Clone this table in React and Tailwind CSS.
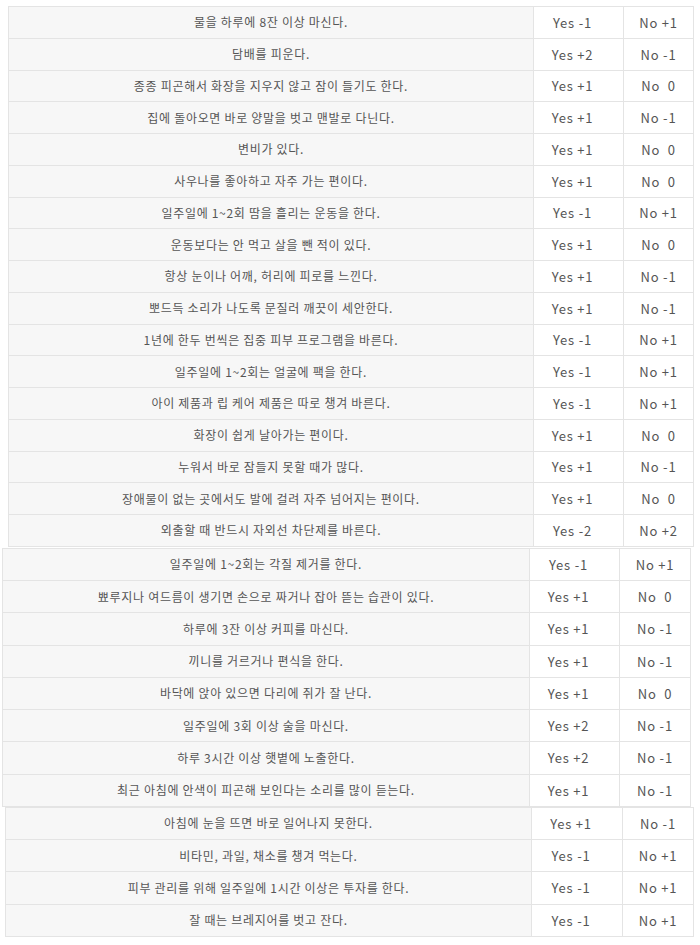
import React from 'react'

const part1 = [
  ['물을 하루에 8잔 이상 마신다.', 'Yes -1', 'No +1'],
  ['담배를 피운다.', 'Yes +2', 'No -1'],
  ['종종 피곤해서 화장을 지우지 않고 잠이 들기도 한다.', 'Yes +1', 'No  0'],
  ['집에 돌아오면 바로 양말을 벗고 맨발로 다닌다.', 'Yes +1', 'No -1'],
  ['변비가 있다.', 'Yes +1', 'No  0'],
  ['사우나를 좋아하고 자주 가는 편이다.', 'Yes +1', 'No  0'],
  ['일주일에 1~2회 땀을 흘리는 운동을 한다.', 'Yes -1', 'No +1'],
  ['운동보다는 안 먹고 살을 뺀 적이 있다.', 'Yes +1', 'No  0'],
  ['항상 눈이나 어깨, 허리에 피로를 느낀다.', 'Yes +1', 'No -1'],
  ['뽀드득 소리가 나도록 문질러 깨끗이 세안한다.', 'Yes +1', 'No -1'],
  ['1년에 한두 번씩은 집중 피부 프로그램을 바른다.', 'Yes -1', 'No +1'],
  ['일주일에 1~2회는 얼굴에 팩을 한다.', 'Yes -1', 'No +1'],
  ['아이 제품과 립 케어 제품은 따로 챙겨 바른다.', 'Yes -1', 'No +1'],
  ['화장이 쉽게 날아가는 편이다.', 'Yes +1', 'No  0'],
  ['누워서 바로 잠들지 못할 때가 많다.', 'Yes +1', 'No -1'],
  ['장애물이 없는 곳에서도 발에 걸려 자주 넘어지는 편이다.', 'Yes +1', 'No  0'],
  ['외출할 때 반드시 자외선 차단제를 바른다.', 'Yes -2', 'No +2'],
]

const part2 = [
  ['일주일에 1~2회는 각질 제거를 한다.', 'Yes -1', 'No +1'],
  ['뾰루지나 여드름이 생기면 손으로 짜거나 잡아 뜯는 습관이 있다.', 'Yes +1', 'No  0'],
  ['하루에 3잔 이상 커피를 마신다.', 'Yes +1', 'No -1'],
  ['끼니를 거르거나 편식을 한다.', 'Yes +1', 'No -1'],
  ['바닥에 앉아 있으면 다리에 쥐가 잘 난다.', 'Yes +1', 'No  0'],
  ['일주일에 3회 이상 술을 마신다.', 'Yes +2', 'No -1'],
  ['하루 3시간 이상 햇볕에 노출한다.', 'Yes +2', 'No -1'],
  ['최근 아침에 안색이 피곤해 보인다는 소리를 많이 듣는다.', 'Yes +1', 'No -1'],
]

const part3 = [
  ['아침에 눈을 뜨면 바로 일어나지 못한다.', 'Yes +1', 'No -1'],
  ['비타민, 과일, 채소를 챙겨 먹는다.', 'Yes -1', 'No +1'],
  ['피부 관리를 위해 일주일에 1시간 이상은 투자를 한다.', 'Yes -1', 'No +1'],
  ['잘 때는 브레지어를 벗고 잔다.', 'Yes -1', 'No +1'],
]

function Row({ q, yes, no, rowClass, qClass, yesClass }) {
  return (
    <div className={`flex border-b border-[#e4e4e4] ${rowClass}`}>
      <div className={`flex items-center justify-center bg-[#f7f7f7] border-r border-[#e4e4e4] tracking-[0.7px] ${qClass}`}>
        {q}
      </div>
      <div className={`flex items-center justify-center border-r border-[#e4e4e4] pr-[12px] text-[13px] tracking-[0.8px] whitespace-pre ${yesClass}`}>
        {yes}
      </div>
      <div className="flex flex-1 items-center justify-center text-[13px] tracking-[0.8px] whitespace-pre">{no}</div>
    </div>
  )
}

export default function App() {
  return (
    <div
      className="bg-white pt-[6px] text-[12px] text-[#555] leading-none"
      style={{ fontFamily: '"Noto Sans CJK KR", "Noto Sans", sans-serif' }}
    >
      <div className="ml-[8px] w-[686px] border-t border-x border-[#e4e4e4]">
        {part1.map(([q, yes, no]) => (
          <Row key={q} q={q} yes={yes} no={no} rowClass="h-[31.75px]" qClass="w-[525px]" yesClass="w-[90px]" />
        ))}
      </div>
      <div className="mt-[1px] ml-[2px] w-[689px] border-t border-x border-[#e4e4e4]">
        {part2.map(([q, yes, no]) => (
          <Row key={q} q={q} yes={yes} no={no} rowClass="h-[32.25px]" qClass="w-[527px]" yesClass="w-[90px]" />
        ))}
      </div>
      <div className="ml-[5px] w-[689px] border-t border-x border-[#e4e4e4]">
        {part3.map(([q, yes, no]) => (
          <Row key={q} q={q} yes={yes} no={no} rowClass="h-[32.25px]" qClass="w-[526px]" yesClass="w-[91px]" />
        ))}
      </div>
    </div>
  )
}
